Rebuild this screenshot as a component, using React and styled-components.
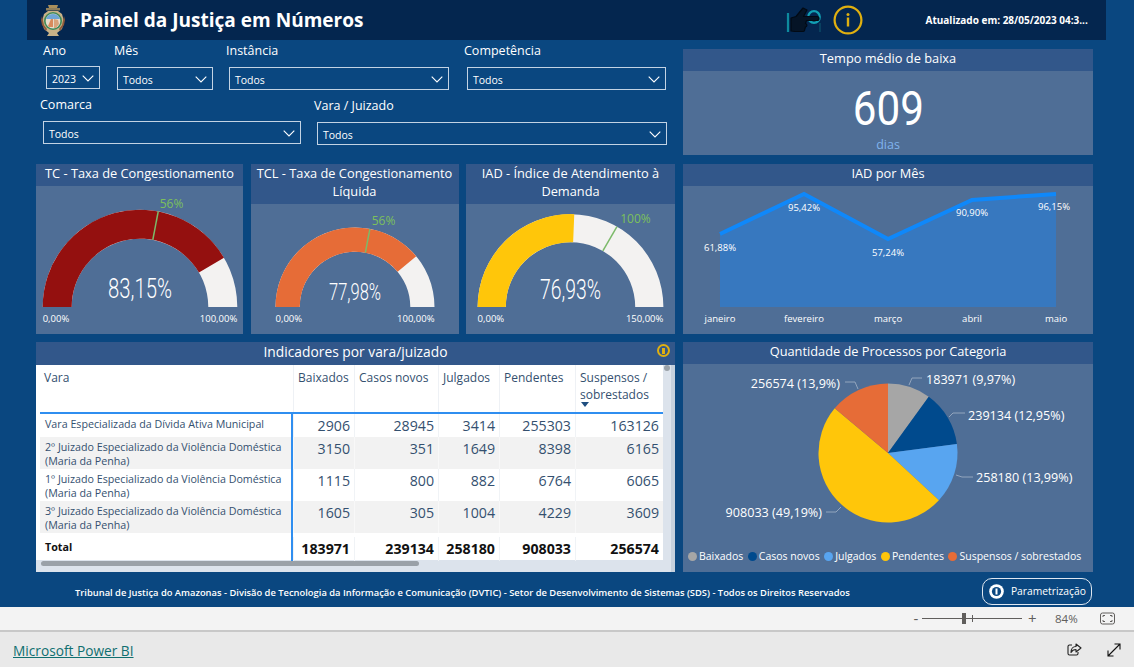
import React from 'react';
import styled, { createGlobalStyle } from 'styled-components';

const Global = createGlobalStyle`
  html, body { margin: 0; padding: 0; overflow: hidden; background: #e9e9e9; }
  body { font-family: "Open Sans", "Noto Sans", sans-serif; }
`;

const Page = styled.div`
  width: 1134px;
  height: 667px;
  display: flex;
  flex-direction: column;
`;

const Report = styled.div`
  height: 607px;
  background: #0a4780;
  display: flex;
  flex-direction: column;
`;

const Header = styled.header`
  height: 40px;
  margin: 0 28px 0 27px;
  padding-left: 13px;
  background: #04264f;
  display: flex;
  align-items: center;
  color: #fff;
`;

const Title = styled.h1`
  margin: 0 0 0 14px;
  font-size: 19.05px;
  font-weight: 700;
  white-space: nowrap;
`;

const HeaderIcons = styled.div`
  margin-left: 423px;
  display: flex;
  align-items: center;
  gap: 11px;
`;

const Updated = styled.div`
  margin-left: 62px;
  font-size: 10px;
  font-weight: 700;
  white-space: nowrap;
`;

const Dashboard = styled.main`
  flex: 1;
  padding-left: 36px;
  display: grid;
  grid-template-columns: 639px 410px;
  grid-template-rows: 116px 170px 230px;
  column-gap: 8px;
  row-gap: 8px;
`;

const Filters = styled.section`
  display: flex;
  flex-direction: column;
`;

const FilterRow = styled.div`
  display: flex;
  height: ${p => p.$h}px;
`;

const Slicer = styled.div`
  width: ${p => p.$w}px;
  margin-left: ${p => p.$left}px;
  padding-top: ${p => p.$top}px;
  display: flex;
  flex-direction: column;
  box-sizing: border-box;
`;

const SlicerLabel = styled.label`
  color: #fff;
  font-size: 12.5px;
  line-height: 17px;
  height: ${p => p.$gap}px;
`;

const SlicerBox = styled.div`
  margin-left: 3px;
  height: 23px;
  box-sizing: border-box;
  border: 1px solid #c3d3e4;
  padding: 2px 5px 0;
  display: flex;
  align-items: center;
  justify-content: space-between;
  color: #fff;
  font-size: 10.5px;
`;

const Card = styled.article`
  display: flex;
  flex-direction: column;
  background: #4f6e96;
  min-width: 0;
  position: relative;
`;

const CardTitle = styled.h2`
  margin: 0;
  background: #32578a;
  color: #fff;
  font-size: ${p => p.$size || 12.8}px;
  font-weight: 400;
  line-height: 18px;
  padding: ${p => p.$top || 0}px 2px ${p => p.$bottom || 4}px;
  text-align: center;
`;

const TimeCard = styled(Card)`
  margin: 9px 0 1px;
`;

const TimeBody = styled.div`
  flex: 1;
  display: flex;
  flex-direction: column;
  align-items: center;
`;

const TimeValue = styled.div`
  color: #fff;
  font-family: Roboto, sans-serif;
  font-size: 49px;
  line-height: 56px;
  margin-top: 10px;
  transform: scaleX(0.86);
`;

const TimeUnit = styled.div`
  color: #80b4ee;
  font-size: 12.5px;
  line-height: 16px;
`;

const KpiRow = styled.div`
  display: grid;
  grid-template-columns: 207px 208px 209px;
  column-gap: 7.5px;
`;

const ChartSvg = styled.svg`
  display: block;
  flex: 1;
  width: 100%;
  min-height: 0;
`;

const Small = styled.text`
  fill: #fff;
  font-family: "Open Sans", sans-serif;
  font-size: 9.5px;
`;

const GaugeValue = styled.text`
  fill: #fff;
  font-family: Roboto, sans-serif;
  font-weight: 300;
  text-anchor: middle;
`;

const TargetLabel = styled.text`
  fill: #7cc05c;
  font-family: "Open Sans", sans-serif;
  font-size: 12px;
  text-anchor: middle;
`;

const pt = (cx, cy, r, f) => {
  const a = Math.PI * (1 - f);
  return [cx + r * Math.cos(a), cy - r * Math.sin(a)];
};

const arc = (cx, cy, r, inner, f0, f1) => {
  const [x0, y0] = pt(cx, cy, r, f0);
  const [x1, y1] = pt(cx, cy, r, f1);
  const [x2, y2] = pt(cx, cy, inner, f1);
  const [x3, y3] = pt(cx, cy, inner, f0);
  return `M${x0} ${y0}A${r} ${r} 0 0 1 ${x1} ${y1}L${x2} ${y2}A${inner} ${inner} 0 0 0 ${x3} ${y3}Z`;
};

const Gauge = ({ w, h, cx, cy, r, inner, f, target, color, value, valueSize, valueW, valueY, maxLabel, targetLabel, lx, ly }) => {
  const [tx0, ty0] = pt(cx, cy, r, target);
  const [tx1, ty1] = pt(cx, cy, inner, target);
  return (
    <ChartSvg viewBox={`0 0 ${w} ${h}`}>
      <path d={arc(cx, cy, r, inner, 0, 1)} fill="#f3f2f1" />
      <path d={arc(cx, cy, r, inner, 0, f)} fill={color} />
      <line x1={tx0} y1={ty0} x2={tx1} y2={ty1} stroke="#7cba6a" strokeWidth="1.5" />
      <TargetLabel x={lx} y={ly}>{targetLabel}</TargetLabel>
      <GaugeValue x={cx} y={valueY} fontSize={valueSize} textLength={valueW} lengthAdjust="spacingAndGlyphs">{value}</GaugeValue>
      <Small x={cx - r} y={cy + 15}>0,00%</Small>
      <Small x={cx + r} y={cy + 15} textAnchor="end">{maxLabel}</Small>
    </ChartSvg>
  );
};

const months = [
  { m: 'janeiro', x: 37, y: 48, label: '61,88%', ly: 65, lx: 37 },
  { m: 'fevereiro', x: 121, y: 8, label: '95,42%', ly: 25, lx: 121 },
  { m: 'março', x: 205, y: 53, label: '57,24%', ly: 70, lx: 205 },
  { m: 'abril', x: 289, y: 14, label: '90,90%', ly: 30, lx: 289 },
  { m: 'maio', x: 373, y: 8, label: '96,15%', ly: 24, lx: 371 },
];

const LineChart = () => {
  const line = months.map(p => `${p.x},${p.y}`).join(' ');
  return (
    <ChartSvg viewBox="0 0 410 148">
      <polygon points={`37,121 ${line} 373,121`} fill="#3778bf" />
      <polyline points={line} fill="none" stroke="#0f88fa" strokeWidth="4" />
      {months.map(p => (
        <g key={p.m}>
          <Small x={p.lx} y={p.ly} textAnchor="middle">{p.label}</Small>
          <Small x={p.x} y={136} textAnchor="middle">{p.m}</Small>
        </g>
      ))}
    </ChartSvg>
  );
};

const TableWrap = styled.div`
  flex: 1;
  background: #dce3ec;
  border-right: 4px solid #c5d0dd;
  position: relative;
`;

const Table = styled.div`
  background: #fff;
  margin-right: 8px;
  padding-left: 4px;
  height: 195px;
  display: flex;
  flex-direction: column;
  color: #34506f;
`;

const cols = '253px 61px 84px 61px 76px 88px';

const Row = styled.div`
  display: grid;
  grid-template-columns: ${cols};
  height: ${p => p.$h}px;
  background: ${p => (p.$alt ? '#f2f2f2' : '#fff')};
`;

const HeadRow = styled(Row)`
  border-bottom: 2px solid #2f8ef0;
  box-sizing: border-box;
`;

const HeadCell = styled.div`
  font-size: 12px;
  line-height: 17px;
  padding: 4px 4px 0;
  border-left: ${p => (p.$first ? 'none' : '1px solid #eef1f5')};
  position: relative;
  white-space: pre-line;
`;

const SortArrow = styled.span`
  position: absolute;
  left: 5px;
  top: 37px;
  border-left: 4.5px solid transparent;
  border-right: 4.5px solid transparent;
  border-top: 5px solid #1f4e80;
`;

const NameCell = styled.div`
  font-size: 10.7px;
  line-height: 14px;
  padding: 3px 4px 0 5px;
  border-right: 2px solid #2f8ef0;
  font-weight: ${p => (p.$bold ? 700 : 400)};
  color: ${p => (p.$bold ? '#111' : 'inherit')};
`;

const NumCell = styled.div`
  font-size: 14.2px;
  line-height: 24px;
  text-align: right;
  padding-right: 4px;
  font-weight: ${p => (p.$bold ? 700 : 400)};
  color: ${p => (p.$bold ? '#111' : 'inherit')};
  border-left: 1px solid ${p => (p.$alt ? '#f8f8f8' : '#f0f3f6')};
`;

const Spacer = styled.div`
  height: 4px;
  display: grid;
  grid-template-columns: ${cols};
`;

const SpacerLine = styled.div`
  grid-column: 1;
  border-right: 2px solid #2f8ef0;
`;

const HScroll = styled.div`
  position: absolute;
  left: 5px;
  top: 196px;
  width: 378px;
  height: 5px;
  border-radius: 3px;
  background: #9aa1a8;
`;

const VScroll = styled.div`
  position: absolute;
  right: 0;
  top: 0;
  width: 8px;
  height: 6px;
  display: flex;
  justify-content: center;

  &::before {
    content: '';
    width: 6px;
    height: 6px;
    border-radius: 3px;
    background: #9aa1a8;
  }
`;

const InfoDot = styled.span`
  position: absolute;
  right: 5px;
  top: 2px;
  width: 13px;
  height: 13px;
  box-sizing: border-box;
  border: 2px solid #e0b010;
  border-radius: 50%;
  display: flex;
  align-items: center;
  justify-content: center;

  &::before {
    content: '';
    width: 3px;
    height: 6px;
    background: #e0b010;
  }
`;

const PieWrap = styled.div`
  flex: 1;
  display: flex;
  flex-direction: column;
`;

const PieText = styled.text`
  fill: #fff;
  font-family: "Open Sans", sans-serif;
  font-size: 12.6px;
`;

const Legend = styled.ul`
  list-style: none;
  margin: 0 0 8px;
  padding: 0 0 0 5px;
  display: flex;
  gap: 4.5px;
`;

const LegendItem = styled.li`
  color: #fff;
  font-size: 10.5px;
  line-height: 16px;
  display: flex;
  align-items: center;
  gap: 2px;
  white-space: nowrap;

  &::before {
    content: '';
    width: 9px;
    height: 9px;
    border-radius: 50%;
    background: ${p => p.$color};
  }
`;

const slices = [
  { name: 'Baixados', v: 9.97, color: '#a6a6a6', label: '183971 (9,97%)' },
  { name: 'Casos novos', v: 12.95, color: '#004a8d', label: '239134 (12,95%)' },
  { name: 'Julgados', v: 13.99, color: '#58a5f0', label: '258180 (13,99%)' },
  { name: 'Pendentes', v: 49.19, color: '#ffc60a', label: '908033 (49,19%)' },
  { name: 'Suspensos / sobrestados', v: 13.9, color: '#e66c37', label: '256574 (13,9%)' },
];

const labelSpots = [
  { x: 243, y: 16, anchor: 'start', line: '226,21 229,14 239,14' },
  { x: 285, y: 52, anchor: 'start', line: '266,53 270,49 282,49' },
  { x: 293, y: 114, anchor: 'start', line: '273,111 279,113 290,113' },
  { x: 139, y: 149, anchor: 'end', line: '158,143 153,148 143,148' },
  { x: 157, y: 20, anchor: 'end', line: '175,25 172,18 162,18' },
];

const PieChart = () => {
  const cx = 205;
  const cy = 89;
  const r = 69.5;
  let total = 0;
  const sum = slices.reduce((a, s) => a + s.v, 0);
  const paths = slices.map(s => {
    const a0 = (total / sum) * 2 * Math.PI;
    total += s.v;
    const a1 = (total / sum) * 2 * Math.PI;
    const big = a1 - a0 > Math.PI ? 1 : 0;
    const d = `M${cx} ${cy}L${cx + r * Math.sin(a0)} ${cy - r * Math.cos(a0)}A${r} ${r} 0 ${big} 1 ${cx + r * Math.sin(a1)} ${cy - r * Math.cos(a1)}Z`;
    return <path key={s.name} d={d} fill={s.color} />;
  });
  return (
    <ChartSvg viewBox="0 0 410 184">
      {paths}
      {slices.map((s, i) => (
        <g key={s.name}>
          <polyline points={labelSpots[i].line} fill="none" stroke="#93a5bd" strokeWidth="1" />
          <PieText x={labelSpots[i].x} y={labelSpots[i].y + 4} textAnchor={labelSpots[i].anchor}>{s.label}</PieText>
        </g>
      ))}
    </ChartSvg>
  );
};

const BottomBar = styled.footer`
  flex: 1;
  display: flex;
  align-items: center;
  padding-left: 75px;
`;

const Credits = styled.div`
  color: #fff;
  font-size: 9.37px;
  font-weight: 600;
  white-space: nowrap;
  margin-top: 5px;
`;

const ParamButton = styled.button`
  margin-left: 132px;
  width: 110px;
  height: 27px;
  margin-top: 3px;
  border: 1px solid #dfe7f0;
  border-radius: 10px;
  background: transparent;
  color: #fff;
  font-family: inherit;
  font-size: 10.3px;
  display: flex;
  align-items: center;
  gap: 7px;
  padding: 0 0 0 6px;
`;

const ZoomBar = styled.div`
  height: 23px;
  background: #f3f3f3;
  border-bottom: 2px solid #c8c8c8;
  display: flex;
  align-items: center;
  color: #605e5c;
  padding-left: 912px;
  font-size: 12px;
`;

const ZoomSign = styled.span`
  width: 8px;
  text-align: center;
  font-size: 15px;
  line-height: 15px;
`;

const Slider = styled.div`
  width: 100px;
  height: 1px;
  margin: 0 6px 0 2px;
  background: #605e5c;
  position: relative;
`;

const SliderThumb = styled.span`
  position: absolute;
  left: 40px;
  top: -5px;
  width: 4px;
  height: 11px;
  background: #605e5c;
`;

const SliderTick = styled.span`
  position: absolute;
  left: 50px;
  top: -3px;
  width: 1px;
  height: 7px;
  background: #605e5c;
`;

const ZoomPct = styled.span`
  margin-left: 19px;
  font-size: 11.5px;
  width: 45px;
`;

const PbiFooter = styled.div`
  flex: 1;
  background: #e9e9e9;
  display: flex;
  align-items: center;
  padding: 1px 13px 0 13px;
`;

const PbiLink = styled.a`
  color: #0f6f70;
  font-size: 13.7px;
  text-decoration: underline;
`;

const PbiIcons = styled.div`
  margin-left: auto;
  display: flex;
  align-items: center;
  gap: 25px;
`;

const Crest = () => (
  <svg width="26" height="33" viewBox="0 0 26 33">
    <path d="M8 1h10l-1 3h-8z" fill="#a98f5c" />
    <rect x="6" y="4" width="14" height="2.5" fill="#8f7f5c" />
    <path d="M4 10l4-3h10l4 3 2 7-2 8-5 4 2 3H7l2-3-5-4-2-8z" fill="#c8b288" />
    <path d="M2 12l2 9 3 4-1 2-4-6-1-5zM24 12l-2 9-3 4 1 2 4-6 1-5z" fill="#8f5a3a" />
    <circle cx="13" cy="17" r="9" fill="#3f8a5a" />
    <circle cx="13" cy="17" r="7.4" fill="#e6dccb" />
    <path d="M6 15a7.4 7.4 0 0 1 14 0z" fill="#6fa6d6" />
    <path d="M8 22l3-7h2v8H9z" fill="#d98a5c" />
    <path d="M14 15l4 1 1 4-3 4h-2z" fill="#d9a27a" />
  </svg>
);

const HandIcon = () => (
  <svg width="36" height="30" viewBox="0 0 36 30">
    <path d="M2 8v19" stroke="#0e8a9e" strokeWidth="2.2" fill="none" />
    <path d="M34 18v9" stroke="#0e5a72" strokeWidth="1" fill="none" />
    <circle cx="28" cy="12" r="5.8" fill="none" stroke="#12a0b4" strokeWidth="2.2" />
    <path d="M5 13l5-1.5 7-8.5 4 2-3.5 6.5h13.5a2 2 0 0 1 0 4H20.5l-1 3a1.8 1.8 0 0 1 0 3.5l-.8 2.5a1.8 1.8 0 0 1-1.5 2H9L5 26z" fill="#051426" stroke="#020a14" strokeWidth="1.2" strokeLinejoin="round" />
  </svg>
);

const InfoIcon = () => (
  <svg width="30" height="30" viewBox="0 0 30 30">
    <circle cx="15" cy="15" r="13.4" fill="none" stroke="#e0b010" strokeWidth="2.2" />
    <circle cx="15" cy="9.5" r="1.5" fill="#e0b010" />
    <rect x="13.8" y="12.5" width="2.4" height="9" fill="#e0b010" />
  </svg>
);

const ParamIcon = () => (
  <svg width="15" height="15" viewBox="0 0 15 15">
    <circle cx="7.5" cy="7.5" r="7.3" fill="#fff" />
    <circle cx="7.5" cy="7.5" r="4.6" fill="#0a4780" />
    <rect x="6.5" y="4.5" width="2" height="6" fill="#fff" />
  </svg>
);

const Chevron = () => (
  <svg width="12" height="7" viewBox="0 0 12 7">
    <path d="M.7.7 6 6l5.3-5.3" fill="none" stroke="#fff" strokeWidth="1.1" />
  </svg>
);

const FitIcon = () => (
  <svg width="15" height="13" viewBox="0 0 15 13">
    <rect x=".5" y="1" width="14" height="11" rx="2" fill="none" stroke="#605e5c" />
    <path d="M3 5V3.5h2M10 3.5h2V5M12 8v1.5h-2M5 9.5H3V8" fill="none" stroke="#605e5c" />
  </svg>
);

const ShareIcon = () => (
  <svg width="15" height="14" viewBox="0 0 15 14">
    <path d="M5 2H2.5A1.5 1.5 0 0 0 1 3.5v7A1.5 1.5 0 0 0 2.5 12h7a1.5 1.5 0 0 0 1.5-1.5V9" fill="none" stroke="#222" strokeWidth="1.1" />
    <path d="M9 1l5 4-5 4V6.500C6.500 6.500 5 7.500 4 9.500 4 6 6 3.500 9 3.500z" fill="none" stroke="#222" strokeWidth="1.1" strokeLinejoin="round" />
  </svg>
);

const ExpandIcon = () => (
  <svg width="14" height="14" viewBox="0 0 14 14">
    <path d="M1 13 13 1M7.500 1H13v5.500M1 7.500V13h5.500" fill="none" stroke="#111" strokeWidth="1.1" />
  </svg>
);

const rows = [
  { name: 'Vara Especializada da Dívida Ativa Municipal', nums: [2906, 28945, 3414, 255303, 163126], h: 23 },
  { name: '2º Juizado Especializado da Violência Doméstica (Maria da Penha)', nums: [3150, 351, 1649, 8398, 6165], h: 32, alt: true },
  { name: '1º Juizado Especializado da Violência Doméstica (Maria da Penha)', nums: [1115, 800, 882, 6764, 6065], h: 32 },
  { name: '3º Juizado Especializado da Violência Doméstica (Maria da Penha)', nums: [1605, 305, 1004, 4229, 3609], h: 32, alt: true },
];

const App = () => (
  <Page>
    <Global />
    <Report>
      <Header>
        <Crest />
        <Title>Painel da Justiça em Números</Title>
        <HeaderIcons>
          <HandIcon />
          <InfoIcon />
        </HeaderIcons>
        <Updated>Atualizado em: 28/05/2023 04:3...</Updated>
      </Header>
      <Dashboard>
        <Filters>
          <FilterRow $h={56}>
            <Slicer $w={57} $left={7} $top={2}>
              <SlicerLabel $gap={24}>Ano</SlicerLabel>
              <SlicerBox>2023<Chevron /></SlicerBox>
            </Slicer>
            <Slicer $w={99} $left={14} $top={2}>
              <SlicerLabel $gap={25}>Mês</SlicerLabel>
              <SlicerBox>Todos<Chevron /></SlicerBox>
            </Slicer>
            <Slicer $w={223} $left={13} $top={2}>
              <SlicerLabel $gap={25}>Instância</SlicerLabel>
              <SlicerBox>Todos<Chevron /></SlicerBox>
            </Slicer>
            <Slicer $w={202} $left={15} $top={2}>
              <SlicerLabel $gap={25}>Competência</SlicerLabel>
              <SlicerBox>Todos<Chevron /></SlicerBox>
            </Slicer>
          </FilterRow>
          <FilterRow $h={60}>
            <Slicer $w={261} $left={4} $top={0}>
              <SlicerLabel $gap={25}>Comarca</SlicerLabel>
              <SlicerBox>Todos<Chevron /></SlicerBox>
            </Slicer>
            <Slicer $w={353} $left={13} $top={1}>
              <SlicerLabel $gap={25}>Vara / Juizado</SlicerLabel>
              <SlicerBox>Todos<Chevron /></SlicerBox>
            </Slicer>
          </FilterRow>
        </Filters>

        <TimeCard>
          <CardTitle>Tempo médio de baixa</CardTitle>
          <TimeBody>
            <TimeValue>609</TimeValue>
            <TimeUnit>dias</TimeUnit>
          </TimeBody>
        </TimeCard>

        <KpiRow>
          <Card>
            <CardTitle>TC - Taxa de Congestionamento</CardTitle>
            <Gauge w={207} h={148} cx={104} cy={121} r={97.3} inner={68.3} f={0.8315} target={0.56} color="#94100f"
              value="83,15%" valueSize={27} valueW={64} valueY={112} maxLabel="100,00%" targetLabel="56%" lx={135.5} ly={22} />
          </Card>
          <Card>
            <CardTitle>TCL - Taxa de Congestionamento Líquida</CardTitle>
            <Gauge w={208} h={130} cx={104} cy={103} r={79.5} inner={55.3} f={0.7798} target={0.56} color="#e66c37"
              value="77,98%" valueSize={23} valueW={52} valueY={96} maxLabel="100,00%" targetLabel="56%" lx={132.5} ly={21} />
          </Card>
          <Card>
            <CardTitle>IAD - Índice de Atendimento à Demanda</CardTitle>
            <Gauge w={209} h={130} cx={104.5} cy={103} r={92.9} inner={64.7} f={0.5129} target={0.6667} color="#ffc60a"
              value="76,93%" valueSize={27} valueW={61} valueY={95} maxLabel="150,00%" targetLabel="100%" lx={169.5} ly={19} />
          </Card>
        </KpiRow>

        <Card>
          <CardTitle>IAD por Mês</CardTitle>
          <LineChart />
        </Card>

        <Card>
          <CardTitle $size={13.8} $top={1}>Indicadores por vara/juizado</CardTitle>
          <InfoDot />
          <TableWrap>
            <Table>
              <HeadRow $h={49}>
                <HeadCell $first>Vara</HeadCell>
                <HeadCell>Baixados</HeadCell>
                <HeadCell>Casos novos</HeadCell>
                <HeadCell>Julgados</HeadCell>
                <HeadCell>Pendentes</HeadCell>
                <HeadCell>{'Suspensos /\nsobrestados'}<SortArrow /></HeadCell>
              </HeadRow>
              {rows.map(r => (
                <Row key={r.name} $h={r.h} $alt={r.alt}>
                  <NameCell>{r.name}</NameCell>
                  {r.nums.map((n, i) => <NumCell key={i} $alt={r.alt}>{n}</NumCell>)}
                </Row>
              ))}
              <Spacer><SpacerLine /></Spacer>
              <Row $h={23}>
                <NameCell $bold>Total</NameCell>
                {[183971, 239134, 258180, 908033, 256574].map(n => <NumCell key={n} $bold>{n}</NumCell>)}
              </Row>
            </Table>
            <HScroll />
            <VScroll />
          </TableWrap>
        </Card>

        <Card>
          <CardTitle>Quantidade de Processos por Categoria</CardTitle>
          <PieWrap>
            <PieChart />
            <Legend>
              {slices.map(s => <LegendItem key={s.name} $color={s.color}>{s.name}</LegendItem>)}
            </Legend>
          </PieWrap>
        </Card>
      </Dashboard>
      <BottomBar>
        <Credits>Tribunal de Justiça do Amazonas - Divisão de Tecnologia da Informação e Comunicação (DVTIC) - Setor de Desenvolvimento de Sistemas (SDS) - Todos os Direitos Reservados</Credits>
        <ParamButton><ParamIcon />Parametrização</ParamButton>
      </BottomBar>
    </Report>
    <ZoomBar>
      <ZoomSign>-</ZoomSign>
      <Slider><SliderThumb /><SliderTick /></Slider>
      <ZoomSign>+</ZoomSign>
      <ZoomPct>84%</ZoomPct>
      <FitIcon />
    </ZoomBar>
    <PbiFooter>
      <PbiLink href="#">Microsoft Power BI</PbiLink>
      <PbiIcons>
        <ShareIcon />
        <ExpandIcon />
      </PbiIcons>
    </PbiFooter>
  </Page>
);

export default App;
